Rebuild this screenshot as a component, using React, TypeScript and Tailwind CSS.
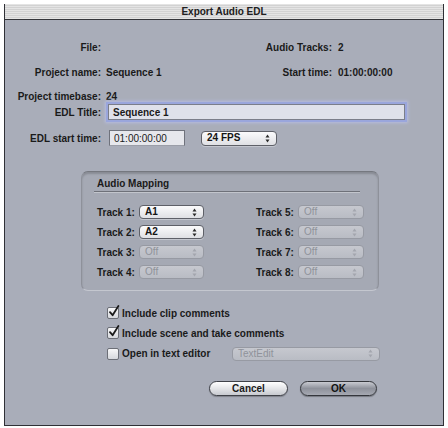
const FONT = "font-['Liberation_Sans',Arial,sans-serif]";

function Arrows({ dim }: { dim?: boolean }) {
  const c = dim ? '#a3a6ae' : '#2a2a2a';
  return (
    <svg width="5" height="9" viewBox="0 0 5 9" className="shrink-0">
      <path d="M2.5 0.5 L4.5 3.5 L0.5 3.5 Z" fill={c} />
      <path d="M2.5 8.5 L4.5 5.5 L0.5 5.5 Z" fill={c} />
    </svg>
  );
}

function Popup({ value, disabled, className = '' }: { value: string; disabled?: boolean; className?: string }) {
  return (
    <div
      className={`flex items-center justify-between h-[14px] rounded-[4px] border pl-[5px] pr-[6px] ${
        disabled
          ? 'border-[#979aa3] bg-gradient-to-b from-[#c6c8cf] to-[#b9bcc4] text-[#8f929a] font-normal'
          : 'border-[#5e6068] bg-gradient-to-b from-[#fbfbfc] to-[#dfe0e4] text-[#151515] shadow-[0_1px_0_#c3c6ce]'
      } ${className}`}
    >
      <span className="leading-none">{value}</span>
      <Arrows dim={disabled} />
    </div>
  );
}

function Check({ on }: { on?: boolean }) {
  return (
    <div className="relative w-[12px] h-[12px] shrink-0 rounded-[2px] border border-[#6c6f77] bg-gradient-to-b from-[#f7f7f8] to-[#d6d8dd]">
      {on && (
        <svg width="12" height="13" viewBox="0 0 12 13" className="absolute left-[0px] top-[-3px]">
          <path d="M2 7.2 L4.6 10.2 L10.4 1" fill="none" stroke="#1b1b1b" strokeWidth="1.8" strokeLinecap="round" strokeLinejoin="round" />
        </svg>
      )}
    </div>
  );
}

function InfoRow({ label, value, right, rightValue }: { label: string; value?: string; right?: string; rightValue?: string }) {
  return (
    <div className="flex h-[16px] items-center">
      <span className="w-[96px] text-right">{label}</span>
      <span className="ml-[5px] w-[130px] font-bold">{value}</span>
      {right && (
        <>
          <span className="w-[96px] text-right">{right}</span>
          <span className="ml-[6px]">{rightValue}</span>
        </>
      )}
    </div>
  );
}

const TRACKS = [
  { n: 1, v: 'A1', on: true },
  { n: 2, v: 'A2', on: true },
  { n: 3, v: 'Off', on: false },
  { n: 4, v: 'Off', on: false },
];

export default function App() {
  return (
    <div className={`w-[448px] h-[428px] bg-white pl-[4px] pt-[4px] ${FONT} text-[10px] font-bold text-[#1a1a1a]`}>
      <div className="w-[440px] h-[422px] flex flex-col border-x border-b border-[#2f3036] bg-[#a9adb9]">
        {/* title bar */}
        <div className="h-[16px] shrink-0 flex items-center justify-center border-b border-[#34353a] bg-[repeating-linear-gradient(180deg,#e4e4e4_0px,#e4e4e4_1px,#d2d2d2_1px,#d2d2d2_2px)] text-[#202020]">
          Export Audio EDL
        </div>

        <div className="flex flex-col mt-[19px]">
          <InfoRow label="File:" right="Audio Tracks:" rightValue="2" />
          <div className="mt-[9px]">
            <InfoRow label="Project name:" value="Sequence 1" right="Start time:" rightValue="01:00:00:00" />
          </div>
          <div className="mt-[8px]">
            <InfoRow label="Project timebase:" value="24" />
          </div>

          {/* EDL title */}
          <div className="flex h-[16px] items-center">
            <span className="w-[96px] text-right">EDL Title:</span>
            <div className="ml-[7px] w-[297px] h-[16px] flex items-center pl-[4px] bg-[#dfe1ea] border border-[#7b7e8a] shadow-[0_0_0_2px_#9aa6dc,0_0_3px_3px_#b6bce0]">
              Sequence 1
            </div>
          </div>

          {/* EDL start time */}
          <div className="flex h-[16px] items-center mt-[10px]">
            <span className="w-[96px] text-right">EDL start time:</span>
            <div className="ml-[8px] w-[76px] h-[16px] flex items-center pl-[4px] bg-[#e6e7ec] border border-[#6f727c] border-b-[#9b9ea8] font-normal">
              01:00:00:00
            </div>
            <Popup value="24 FPS" className="ml-[16px] w-[76px] h-[15px]" />
          </div>

          {/* audio mapping group */}
          <div className="ml-[76px] mt-[25px] w-[298px] h-[120px] rounded-[7px] border border-[#75787f] border-b-[#c4c7cf] border-x-[#8e919a] bg-[#a5a9b4] shadow-[inset_0_2px_2px_rgba(0,0,0,0.18)] px-[12px] pt-[5px]">
            <div className="pl-[3px] h-[13px] flex items-center">Audio Mapping</div>
            <div className="mt-[1px] mr-[6px] h-[2px] border-t border-[#6e7179] border-b border-b-[#c2c5cc]" />
            <div className="grid grid-cols-2 gap-y-[6px] mt-[12px]">
              {TRACKS.map((t) => (
                <div key={t.n} className="contents">
                  <div className="flex items-center h-[14px] pl-[3px]">
                    <span className="w-[42px]">Track {t.n}:</span>
                    <Popup value={t.v} disabled={!t.on} className="w-[65px]" />
                  </div>
                  <div className="flex items-center h-[14px] pl-[26px]">
                    <span className="w-[42px]">Track {t.n + 4}:</span>
                    <Popup value="Off" disabled className="w-[66px]" />
                  </div>
                </div>
              ))}
            </div>
          </div>

          {/* options */}
          <div className="ml-[102px] mt-[16px] flex flex-col gap-[8px]">
            <div className="flex items-center h-[12px] gap-[3px]">
              <Check on />
              <span>Include clip comments</span>
            </div>
            <div className="flex items-center h-[12px] gap-[3px]">
              <Check on />
              <span>Include scene and take comments</span>
            </div>
            <div className="flex items-center h-[13px] gap-[3px]">
              <Check />
              <span className="w-[107px]">Open in text editor</span>
              <Popup value="TextEdit" disabled className="w-[148px]" />
            </div>
          </div>

          {/* buttons */}
          <div className="flex mt-[21px] ml-[204px] gap-[12px]">
            <button className="w-[79px] h-[15px] rounded-full border border-[#3f4148] bg-gradient-to-b from-[#ffffff] via-[#e4e5e8] to-[#c8cad0] shadow-[0_1px_1px_rgba(0,0,0,0.25)] flex items-center justify-center text-[#1a1a1a]">
              Cancel
            </button>
            <button className="w-[77px] h-[15px] rounded-full border border-[#34363c] bg-gradient-to-b from-[#c9cbd2] via-[#8e919b] to-[#a6a9b2] shadow-[0_1px_1px_rgba(0,0,0,0.3)] flex items-center justify-center text-[#111]">
              OK
            </button>
          </div>
        </div>
      </div>
    </div>
  );
}
